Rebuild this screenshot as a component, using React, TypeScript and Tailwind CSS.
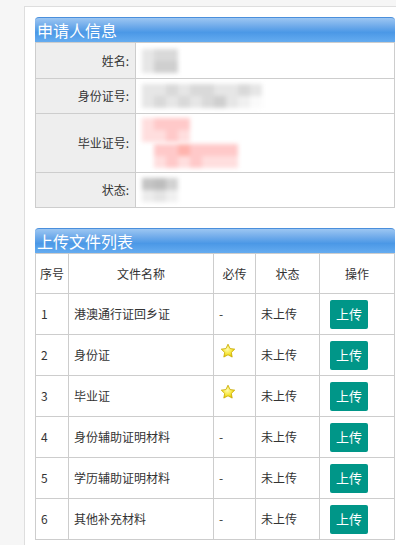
import React from "react";

const font = { fontFamily: '"Microsoft YaHei","Noto Sans CJK SC","Noto Sans",sans-serif' };

function Header({ title }: { title: string }) {
  return (
    <div className="h-[25px] rounded-t-[4px] border-t border-[#4a8fdc] bg-[linear-gradient(to_bottom,#9cc6f2_0%,#6eaaea_35%,#4b98e6_60%,#65acf0_100%)] pl-[2px] text-[16px] leading-[24px] text-white">
      {title}
    </div>
  );
}

function Blur({ cells }: { cells: string[][] }) {
  return (
    <div className="blur-[2px]">
      {cells.map((row, i) => (
        <div key={i} className="flex">
          {row.map((c, j) => (
            <div key={j} className="h-[12px] w-[12px]" style={{ background: c }} />
          ))}
        </div>
      ))}
    </div>
  );
}

function Star() {
  return (
    <svg width="16" height="16" viewBox="0 0 24 24">
      <defs>
        <radialGradient id="sg" cx="45%" cy="40%" r="60%">
          <stop offset="0%" stopColor="#fffbb0" />
          <stop offset="60%" stopColor="#f6e63a" />
          <stop offset="100%" stopColor="#e2c400" />
        </radialGradient>
      </defs>
      <path
        d="M12 1.8l3.1 6.5 7 .9-5.1 4.9 1.3 7-6.3-3.4-6.3 3.4 1.3-7L1.9 9.2l7-.9z"
        fill="url(#sg)"
        stroke="#c8a800"
        strokeWidth="1.2"
        strokeLinejoin="round"
      />
    </svg>
  );
}

const g1 = "#d9d9d9";
const g2 = "#cfcfcf";
const g3 = "#e6e6e6";
const p1 = "#ffc9c9";
const p2 = "#ffb3ad";
const p3 = "#ffdede";

const files = [
  { n: "1", name: "港澳通行证回乡证", must: false },
  { n: "2", name: "身份证", must: true },
  { n: "3", name: "毕业证", must: true },
  { n: "4", name: "身份辅助证明材料", must: false },
  { n: "5", name: "学历辅助证明材料", must: false },
  { n: "6", name: "其他补充材料", must: false },
];

export default function App() {
  return (
    <div className="min-h-[545px] w-[396px] overflow-hidden bg-[#f6f6f6] text-[12px] text-[#333]" style={font}>
      <div className="ml-[24px] mt-[6px] min-h-[539px] border-l border-t border-[#dedede] bg-white pl-[10px] pr-[1px] pt-[10px]">
        <Header title="申请人信息" />
        <table className="w-full border-collapse border border-[#cdcdcd]">
          <tbody>
            <tr className="h-[36px]">
              <td className="w-[100px] border border-[#cdcdcd] bg-[#eeeeee] pr-[6px] text-right">姓名:</td>
              <td className="border border-[#cdcdcd] pl-[6px]">
                <Blur cells={[[g3, g1, g1], [g3, g2, g2]]} />
              </td>
            </tr>
            <tr className="h-[35px]">
              <td className="border border-[#cdcdcd] bg-[#eeeeee] pr-[6px] text-right">身份证号:</td>
              <td className="border border-[#cdcdcd] pl-[6px]">
                <Blur cells={[[g3, g3, g1, g3, g1, g1, g3, g3, g1, g3], [g3, g1, g3, g1, g3, g1, g2, g3, "#f0f0f0", "#fafafa"]]} />
              </td>
            </tr>
            <tr className="h-[59px]">
              <td className="border border-[#cdcdcd] bg-[#eeeeee] pr-[6px] text-right">毕业证号:</td>
              <td className="border border-[#cdcdcd] pl-[6px]">
                <Blur cells={[[p3, p1, p1, p1, "#fff"], [p3, p3, p1, p3, "#fff"]]} />
                <div className="ml-[12px] mt-[2px]">
                  <Blur cells={[[p1, p1, p2, p1, p1, p1, p1], [p3, p1, p3, p1, p3, p3, p3]]} />
                </div>
              </td>
            </tr>
            <tr className="h-[35px]">
              <td className="border border-[#cdcdcd] bg-[#eeeeee] pr-[6px] text-right">状态:</td>
              <td className="border border-[#cdcdcd] pl-[6px]">
                <Blur cells={[["#c4c4c4", "#bdbdbd", "#d2d2d2"], ["#ececec", "#e4e4e4", "#f0f0f0"]]} />
              </td>
            </tr>
          </tbody>
        </table>

        <div className="mt-[20px]">
          <Header title="上传文件列表" />
          <table className="w-full border-collapse border border-[#cdcdcd]">
            <thead>
              <tr className="h-[40px]">
                <th className="w-[33px] border border-[#cdcdcd] font-normal">序号</th>
                <th className="w-[145px] border border-[#cdcdcd] font-normal">文件名称</th>
                <th className="w-[42px] border border-[#cdcdcd] font-normal">必传</th>
                <th className="w-[64px] border border-[#cdcdcd] font-normal">状态</th>
                <th className="border border-[#cdcdcd] font-normal">操作</th>
              </tr>
            </thead>
            <tbody>
              {files.map((f) => (
                <tr key={f.n} className="h-[41px]">
                  <td className="border border-[#cdcdcd] pl-[5px]">{f.n}</td>
                  <td className="border border-[#cdcdcd] pl-[5px]">{f.name}</td>
                  <td className="border border-[#cdcdcd] pl-[5px]">
                    {f.must ? (
                      <div className="-mt-[8px] ml-[1px]">
                        <Star />
                      </div>
                    ) : (
                      "-"
                    )}
                  </td>
                  <td className="border border-[#cdcdcd] pl-[5px]">未上传</td>
                  <td className="border border-[#cdcdcd] pl-[10px]">
                    <button className="h-[29px] w-[38px] rounded-[2px] bg-[#009688] text-[13px] text-white">上传</button>
                  </td>
                </tr>
              ))}
            </tbody>
          </table>
        </div>
      </div>
    </div>
  );
}
